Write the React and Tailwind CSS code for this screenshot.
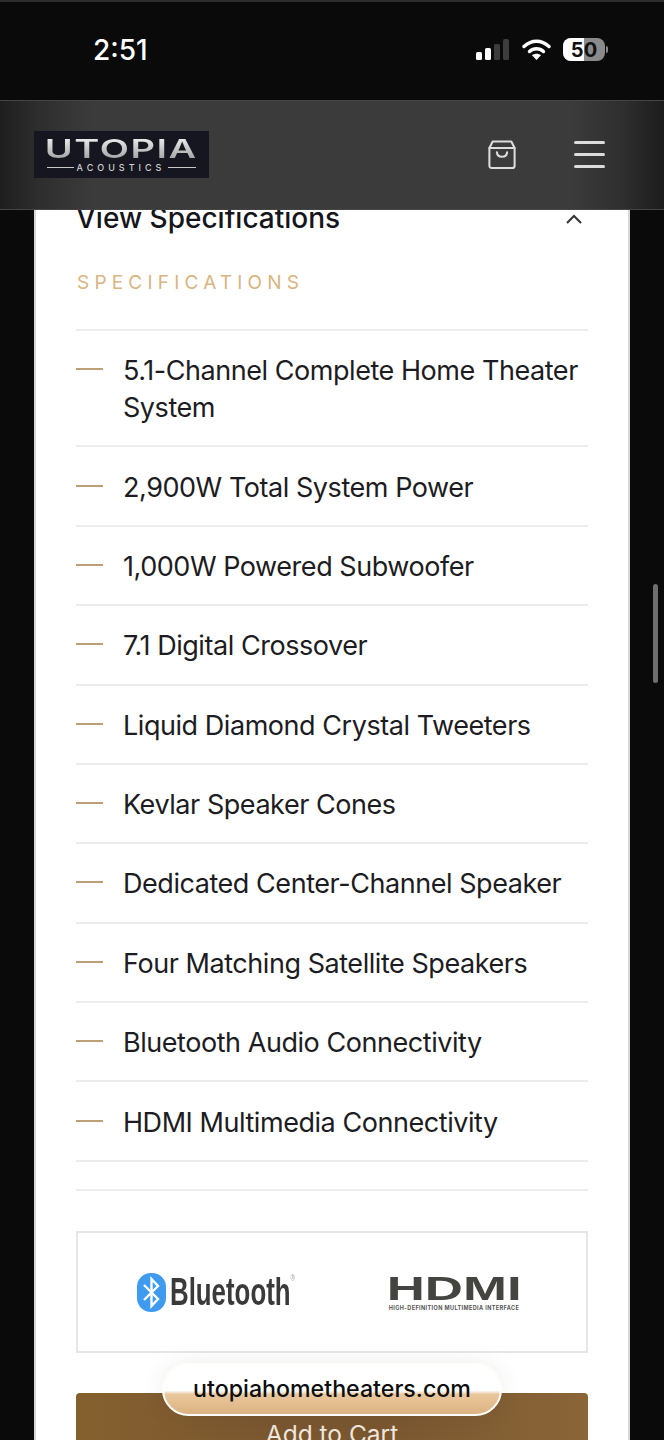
const specs = [
  "5.1-Channel Complete Home Theater System",
  "2,900W Total System Power",
  "1,000W Powered Subwoofer",
  "7.1 Digital Crossover",
  "Liquid Diamond Crystal Tweeters",
  "Kevlar Speaker Cones",
  "Dedicated Center-Channel Speaker",
  "Four Matching Satellite Speakers",
  "Bluetooth Audio Connectivity",
  "HDMI Multimedia Connectivity",
];

function StatusBar() {
  return (
    <div className="h-[100px] shrink-0 bg-[#0a0a0a] border-t-2 border-[#2e2e2e] flex items-center justify-between pl-[93px] pr-[56px] pb-[3px]">
      <span className="text-[28px] leading-none font-medium text-white">2:51</span>
      <div className="flex items-center gap-[12px]">
        <svg width="33" height="21" viewBox="0 0 33 21">
          <rect x="0" y="13" width="6" height="8" rx="1.5" fill="#fff" />
          <rect x="9" y="9" width="6" height="12" rx="1.5" fill="#fff" />
          <rect x="18" y="5" width="6" height="16" rx="1.5" fill="#3c3c3c" />
          <rect x="27" y="0" width="6" height="21" rx="1.5" fill="#3c3c3c" />
        </svg>
        <svg width="29" height="21" viewBox="0 0 29 21" fill="none" className="ml-[1px]">
          <path d="M2 7.5C9.5 0.5 19.5 0.5 27 7.5" stroke="#fff" strokeWidth="3.4" strokeLinecap="round" />
          <path d="M7.5 12.5C11.5 8.8 17.5 8.8 21.5 12.5" stroke="#fff" strokeWidth="3.4" strokeLinecap="round" />
          <path d="M14.5 21L10 16.3C12.6 14.3 16.4 14.3 19 16.3Z" fill="#fff" />
        </svg>
        <div className="flex items-center gap-[1px]">
          <div className="relative w-[42px] h-[23px] rounded-[8px] overflow-hidden bg-[#8a8a8a]">
            <div className="absolute left-0 top-0 bottom-0 w-[21px] bg-white" />
            <span className="absolute inset-0 flex items-center justify-center text-[20px] leading-none font-bold text-[#111]">50</span>
          </div>
          <div className="w-[2px] h-[7px] rounded-r-sm bg-[#8a8a8a]" />
        </div>
      </div>
    </div>
  );
}

function Header() {
  return (
    <div className="relative z-10 h-[110px] shrink-0 flex items-center justify-between pl-[34px] pr-[59px] pb-[2px] bg-[linear-gradient(90deg,#1e1e1e_0%,#2e2e2e_6%,#3b3b3b_14%,#3b3b3b_86%,#2e2e2e_94%,#1c1c1c_100%)] border-t border-b border-[#454545]">
      <div className="w-[175px] h-[47px] bg-[#15161f] flex flex-col items-center pt-[6px]">
        <span className="text-[25px] leading-[24px] font-semibold tracking-[1px] bg-gradient-to-b from-[#f0f0f0] to-[#9d9d9d] bg-clip-text text-transparent scale-x-[1.52]">UTOPIA</span>
        <div className="flex items-center gap-[3px] mt-[2px]">
          <div className="w-[27px] h-[1px] bg-[#c8c8c8]" />
          <span className="text-[9px] leading-[10px] font-medium tracking-[4px] text-[#d0d0d0]">ACOUSTICS</span>
          <div className="w-[28px] h-[1px] bg-[#c8c8c8]" />
        </div>
      </div>
      <div className="flex items-center gap-[58px]">
        <svg width="28" height="31" viewBox="0 0 30 32" fill="none" stroke="#dcdcdc" strokeWidth="2.2" strokeLinecap="round" strokeLinejoin="round">
          <path d="M5 2H25L28.5 9V28C28.5 29.5 27.5 30.5 26 30.5H4C2.5 30.5 1.5 29.5 1.5 28V9Z" />
          <path d="M1.5 9H28.5" />
          <path d="M9.5 13.5C10 20 20 20 20.5 13.5" />
        </svg>
        <div className="w-[31px] flex flex-col gap-[9px]">
          <div className="h-[3px] rounded-full bg-[#dcdcdc]" />
          <div className="h-[3px] rounded-full bg-[#dcdcdc]" />
          <div className="h-[3px] rounded-full bg-[#dcdcdc]" />
        </div>
      </div>
    </div>
  );
}

function Logos() {
  return (
    <div className="h-[122px] mt-[40px] border-2 border-[#e6e6e6] flex items-center pl-[59px] pr-[67px] justify-between">
      <div className="flex items-center gap-[4px] mt-[2px]">
        <svg width="29" height="39" viewBox="0 0 29 39" fill="none">
          <rect x="0" y="0" width="29" height="39" rx="14" fill="#3f9bf0" />
          <path d="M7 12L21 26L14.5 33V6L21 13L7 27" stroke="#fff" strokeWidth="2.4" strokeLinejoin="miter" />
        </svg>
        <div className="w-[120px] h-[39px] relative">
          <span className="absolute left-0 top-0 origin-left text-[38px] leading-[39px] font-bold text-[#3a3a3a] scale-x-[0.68] whitespace-nowrap font-['Liberation_Sans',sans-serif]">Bluetooth<sup className="text-[9px] font-normal text-[#999] top-[-24px] align-baseline relative">®</sup></span>
        </div>
      </div>
      <div className="w-[130px] flex flex-col items-center mt-[4px]">
        <span className="text-[33px] leading-[26px] font-black text-[#444440] scale-x-[1.6] font-['Liberation_Sans',sans-serif]">HDMI</span>
        <span className="mt-[3px] text-[5.5px] leading-[7px] font-bold tracking-[0.4px] whitespace-nowrap text-[#555]">HIGH-DEFINITION MULTIMEDIA INTERFACE</span>
      </div>
    </div>
  );
}

export default function App() {
  return (
    <div className="relative h-[1440px] w-[664px] overflow-hidden bg-[#0a0a0a] flex flex-col font-['Inter',sans-serif]">
      <StatusBar />
      <Header />
      <main className="w-[596px] ml-[34px] flex-1 bg-white border-l-2 border-r-2 border-[#d8d8d8] px-[40px]">
        <div className="flex items-center justify-between mt-[-11px] mr-[7px]">
          <span className="text-[28px] leading-[38px] font-medium text-[#15151b]">View Specifications</span>
          <svg width="18" height="11" viewBox="0 0 18 11" fill="none" stroke="#333" strokeWidth="2" className="mr-[-2px]">
            <path d="M2 10L9 3L16 10" />
          </svg>
        </div>
        <div className="mt-[33px] text-[19px] leading-[26px] tracking-[5.2px] text-[#d9b47f] pl-[1px]">SPECIFICATIONS</div>
        <ul className="mt-[33px] border-t-2 border-[#ececec]">
          {specs.map((s) => (
            <li key={s} className="flex items-start border-b-2 border-[#ececec] pt-[21.2px] pb-[19.2px]">
              <div className="w-[27px] h-[2px] mt-[16px] shrink-0 bg-[#bd9f75]" />
              <span className="ml-[20px] text-[27px] leading-[37px] tracking-[-0.45px] text-[#1c1c22]">{s}</span>
            </li>
          ))}
        </ul>
        <div className="h-[2px] mt-[27px] bg-[#ececec]" />
        <Logos />
        <div className="mt-[40px] h-[80px] rounded-t-[4px] flex justify-center pt-[27px] bg-[linear-gradient(90deg,#85602f_0%,#7a5730_40%,#7a5730_60%,#8a6538_100%)]">
          <span className="text-[24.5px] leading-[28px] text-[#f0e8de]">Add to Cart</span>
        </div>
      </main>
      <div className="absolute right-[6px] top-[584px] w-[5px] h-[99px] rounded-full bg-[#6e6e6e]" />
      <div className="absolute left-[162px] top-[1363px] w-[340px] h-[53px] rounded-[27px] border-2 border-[#fffdf9] bg-[linear-gradient(180deg,#ffffff_0%,#ffffff_52%,#e9c79c_60%,#dcb382_100%)] shadow-[0_0_26px_rgba(0,0,0,0.07)] flex items-start justify-center pt-[9px]">
        <span className="text-[23.2px] leading-[30px] font-medium text-[#0e0e0e]">utopiahometheaters.com</span>
      </div>
    </div>
  );
}
